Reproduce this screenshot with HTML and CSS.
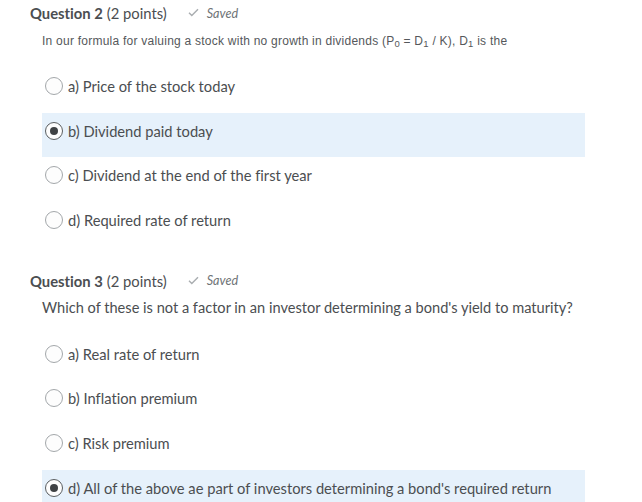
FILE: index.html
```html
<!DOCTYPE html>
<html lang="en">
<head>
<meta charset="utf-8">
<title>Quiz</title>
<link rel="stylesheet" href="styles.css">
</head>
<body>
<section class="question q2">
  <div class="q-header">
    <span class="q-title"><b>Question 2</b> (2 points)</span>
    <span class="saved">
      <svg class="check" width="11" height="9" viewBox="0 0 11 9"><path d="M1 4.8 L3.8 7.6 L10 1.2" fill="none" stroke="#a9adb0" stroke-width="1.4"/></svg>
      <i>Saved</i>
    </span>
  </div>
  <p class="q-text small">In our formula for valuing a stock with no growth in dividends (P<sub>0</sub> = D<sub>1</sub> / K), D<sub>1</sub> is the</p>
  <ul class="options">
    <li class="option"><span class="radio"></span><span class="label">a) Price of the stock today</span></li>
    <li class="option selected"><span class="radio checked"></span><span class="label">b) Dividend paid today</span></li>
    <li class="option"><span class="radio"></span><span class="label">c) Dividend at the end of the first year</span></li>
    <li class="option"><span class="radio"></span><span class="label">d) Required rate of return</span></li>
  </ul>
</section>
<section class="question q3">
  <div class="q-header">
    <span class="q-title"><b>Question 3</b> (2 points)</span>
    <span class="saved">
      <svg class="check" width="11" height="9" viewBox="0 0 11 9"><path d="M1 4.8 L3.8 7.6 L10 1.2" fill="none" stroke="#a9adb0" stroke-width="1.4"/></svg>
      <i>Saved</i>
    </span>
  </div>
  <p class="q-text large">Which of these is not a factor in an investor determining a bond's yield to maturity?</p>
  <ul class="options">
    <li class="option"><span class="radio"></span><span class="label">a) Real rate of return</span></li>
    <li class="option"><span class="radio"></span><span class="label">b) Inflation premium</span></li>
    <li class="option"><span class="radio"></span><span class="label">c) Risk premium</span></li>
    <li class="option selected"><span class="radio checked"></span><span class="label">d) All of the above ae part of investors determining a bond's required return</span></li>
  </ul>
</section>
</body>
</html>
```

FILE: styles.css
```css
html, body {
  margin: 0;
  padding: 0;
  background: #ffffff;
}
body {
  font-family: Lato, "Open Sans", sans-serif;
  color: #4b4e51;
  overflow: hidden;
  font-variant-ligatures: none;
}
.question {
  padding-left: 30px;
}
.q3 {
  margin-top: 21px;
}
.q-header {
  display: flex;
  align-items: center;
  height: 26px;
  font-size: 14.8px;
}
.q-title b {
  font-weight: 700;
}
.saved {
  display: flex;
  align-items: center;
  margin-left: 21px;
  font-size: 12.6px;
  color: #6e7376;
}
.check {
  margin-right: 8px;
  margin-top: -1px;
}
.q-text {
  margin: 0 0 0 12px;
  line-height: 20px;
}
.q-text.small {
  margin-top: 5px;
  font-family: "Liberation Sans", Arial, sans-serif;
  font-size: 12px;
  letter-spacing: 0.24px;
  color: #55585b;
}
.q-text.small sub {
  font-size: 9.5px;
  vertical-align: -2px;
  line-height: 0;
}
.q-text.large {
  margin-top: 4px;
  font-size: 14.6px;
}
.options {
  list-style: none;
  margin: 17px 0 0 12px;
  padding: 0;
  width: 543px;
}
.q3 .options {
  margin-top: 18px;
}
.option {
  display: flex;
  align-items: center;
  height: 36px;
  padding: 0 0 8.7px 3px;
  font-size: 14.7px;
}
.option.selected {
  background: #e6f1fb;
}
.radio {
  box-sizing: border-box;
  width: 18px;
  height: 18px;
  border-radius: 50%;
  border: 1px solid #a3a7aa;
  background: #fdfdfd;
  margin-right: 5px;
  display: flex;
  align-items: center;
  justify-content: center;
  flex: none;
}
.radio.checked {
  border-color: #5a5e60;
}
.radio.checked::after {
  content: "";
  width: 8px;
  height: 8px;
  border-radius: 50%;
  background: #3f4244;
}
```
